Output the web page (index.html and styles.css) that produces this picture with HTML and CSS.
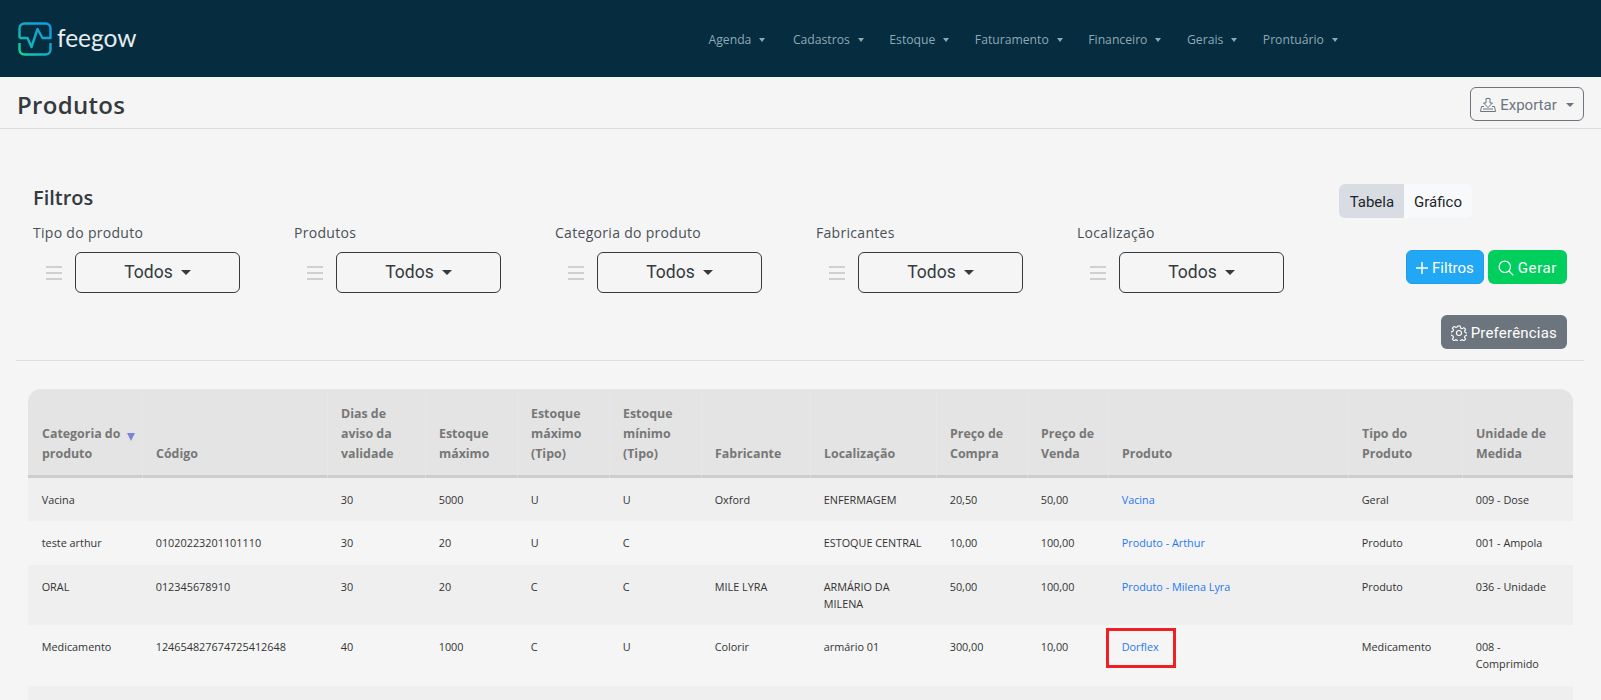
FILE: index.html
```html
<!DOCTYPE html>
<html lang="pt-BR">
<head>
<meta charset="utf-8">
<title>Produtos</title>
<link rel="stylesheet" href="styles.css">
</head>
<body>
<header class="topbar">
  <a class="logo" href="#">
    <svg class="logo-mark" viewBox="0 0 34 34" fill="none">
      <defs><linearGradient id="lg" x1="0" y1="34" x2="34" y2="0" gradientUnits="userSpaceOnUse"><stop offset="0" stop-color="#0fe08a"/><stop offset=".4" stop-color="#12b0c0"/><stop offset="1" stop-color="#0d9bea"/></linearGradient></defs>
      <path d="M1.500 16V6.500a5 5 0 0 1 5-5h21a5 5 0 0 1 5 5V16H24.500L19.500 7 13.500 25 9.500 16H1.500" stroke="url(#lg)" stroke-width="2.400" stroke-linejoin="round"/>
      <path d="M1.500 21V27.500a5 5 0 0 0 5 5h21a5 5 0 0 0 5-5V21" stroke="url(#lg)" stroke-width="2.400"/>
    </svg>
    <span class="logo-text">feegow</span>
  </a>
  <nav class="nav">
    <a class="nav-item" href="#">Agenda</a>
    <a class="nav-item" href="#">Cadastros</a>
    <a class="nav-item" href="#">Estoque</a>
    <a class="nav-item" href="#">Faturamento</a>
    <a class="nav-item" href="#">Financeiro</a>
    <a class="nav-item" href="#">Gerais</a>
    <a class="nav-item" href="#">Prontuário</a>
  </nav>
</header>

<div class="page-head">
  <h1 class="page-title">Produtos</h1>
  <button class="btn-export">
    <svg class="ico-export" viewBox="0 0 16 16" fill="none" stroke="#6c757d" stroke-width="1"><path d="M6 1.500h4v4.500h2.500L8 10.500 3.500 6H6z"/><path d="M4 9.500H1.500L.5 14.500h15l-1-5H12"/><path d="M3 12h10"/></svg>
    Exportar<span class="caret caret-sm"></span>
  </button>
</div>

<section class="filters">
  <div class="filters-left">
    <h2 class="filters-title">Filtros</h2>
    <div class="filter-row">
      <div class="filter"><label class="filter-label">Tipo do produto</label><div class="filter-ctl"><span class="handle"></span><button class="btn-select">Todos<span class="caret"></span></button></div></div>
      <div class="filter"><label class="filter-label">Produtos</label><div class="filter-ctl"><span class="handle"></span><button class="btn-select">Todos<span class="caret"></span></button></div></div>
      <div class="filter"><label class="filter-label">Categoria do produto</label><div class="filter-ctl"><span class="handle"></span><button class="btn-select">Todos<span class="caret"></span></button></div></div>
      <div class="filter"><label class="filter-label">Fabricantes</label><div class="filter-ctl"><span class="handle"></span><button class="btn-select">Todos<span class="caret"></span></button></div></div>
      <div class="filter"><label class="filter-label">Localização</label><div class="filter-ctl"><span class="handle"></span><button class="btn-select">Todos<span class="caret"></span></button></div></div>
    </div>
  </div>
  <div class="filters-right">
    <div class="toggle"><button class="toggle-btn is-active">Tabela</button><button class="toggle-btn">Gráfico</button></div>
    <div class="actions">
      <button class="btn btn-blue"><svg class="ico-plus" viewBox="0 0 12 12" fill="none" stroke="#fff" stroke-width="1.500"><path d="M6 0v12M0 6h12"/></svg>Filtros</button>
      <button class="btn btn-green"><svg class="ico" viewBox="0 0 16 16" fill="none" stroke="#fff" stroke-width="1.200"><circle cx="6.800" cy="6.800" r="5.700"/><path d="M11 11l4.300 4.300"/></svg>Gerar</button>
    </div>
    <button class="btn btn-grey"><svg class="ico" viewBox="0 0 16 16" fill="none" stroke="#fff" stroke-width="1.100"><circle cx="8" cy="8" r="2.500"/><path d="M6.800 1h2.400l.4 2 1.500.7 1.800-1.100 1.700 1.700-1.100 1.800.7 1.500 2 .4v2.400l-2 .4-.7 1.500 1.100 1.800-1.700 1.700-1.800-1.100-1.500.7-.4 2H6.800l-.4-2-1.500-.7-1.800 1.100-1.700-1.700 1.100-1.800-.7-1.500-2-.4V6.800l2-.4.7-1.500-1.100-1.800 1.700-1.700 1.800 1.100 1.500-.7z"/></svg>Preferências</button>
  </div>
</section>
<hr class="rule">

<div class="table-wrap">
<table class="data">
  <colgroup>
    <col class="c1"><col class="c2"><col class="c3"><col class="c4"><col class="c5"><col class="c6"><col class="c7"><col class="c8"><col class="c9"><col class="c10"><col class="c11"><col class="c12"><col class="c13">
  </colgroup>
  <thead>
    <tr>
      <th class="th-sort">Categoria do <span class="sort"></span> produto</th><th>Código</th><th>Dias de aviso da validade</th><th>Estoque máximo</th><th>Estoque máximo (Tipo)</th><th>Estoque mínimo (Tipo)</th><th>Fabricante</th><th>Localização</th><th>Preço de Compra</th><th>Preço de Venda</th><th>Produto</th><th>Tipo do Produto</th><th>Unidade de Medida</th>
    </tr>
  </thead>
  <tbody>
    <tr><td>Vacina</td><td></td><td>30</td><td>5000</td><td>U</td><td>U</td><td>Oxford</td><td>ENFERMAGEM</td><td>20,50</td><td>50,00</td><td><a href="#">Vacina</a></td><td>Geral</td><td>009 - Dose</td></tr>
    <tr><td>teste arthur</td><td>01020223201101110</td><td>30</td><td>20</td><td>U</td><td>C</td><td></td><td>ESTOQUE CENTRAL</td><td>10,00</td><td>100,00</td><td><a href="#">Produto - Arthur</a></td><td>Produto</td><td>001 - Ampola</td></tr>
    <tr><td>ORAL</td><td>012345678910</td><td>30</td><td>20</td><td>C</td><td>C</td><td>MILE LYRA</td><td>ARMÁRIO DA MILENA</td><td>50,00</td><td>100,00</td><td><a href="#">Produto - Milena Lyra</a></td><td>Produto</td><td>036 - Unidade</td></tr>
    <tr><td>Medicamento</td><td>124654827674725412648</td><td>40</td><td>1000</td><td>C</td><td>U</td><td>Colorir</td><td>armário 01</td><td>300,00</td><td>10,00</td><td class="marked"><a href="#">Dorflex</a><span class="mark-box"></span></td><td>Medicamento</td><td>008 - Comprimido</td></tr>
    <tr><td>&nbsp;</td><td></td><td></td><td></td><td></td><td></td><td></td><td></td><td></td><td></td><td></td><td></td><td></td></tr>
  </tbody>
</table>
</div>
</body>
</html>
```

FILE: styles.css
```css
* { box-sizing: border-box; }
html, body { margin: 0; height: 700px; overflow: hidden; }
body { background: #f5f5f5; font-family: "Open Sans", sans-serif; color: #212529; }
button { font-family: Roboto, "Liberation Sans", sans-serif; cursor: pointer; }

.topbar { height: 77px; background: #052c3f; display: flex; align-items: center; }
.logo { display: flex; align-items: center; margin-left: 18px; text-decoration: none; width: 118px; }
.logo-mark { width: 34px; height: 34px; flex: none; }
.logo-text { font-family: Lato, sans-serif; font-weight: 400; font-size: 24.5px; color: #e6edf0; margin-left: 5px; line-height: 34px; position: relative; top: -1px; }
.nav { display: flex; margin-left: 572.5px; position: relative; top: 1px; }
.nav-item { font-size: 12.2px; color: #8ea9b5; text-decoration: none; margin-right: 25.5px; display: flex; align-items: center; }
.nav-item:first-child { margin-right: 27.5px; }
.nav-item::after { content: ""; margin-left: 8px; border-top: 4px solid #8ea9b5; border-left: 3.5px solid transparent; border-right: 3.5px solid transparent; }

.page-head { height: 52px; border-bottom: 1px solid #dcdcdc; display: flex; align-items: center; justify-content: space-between; padding: 3px 17px 0; }
.page-title { margin: 0; font-size: 24px; font-weight: 600; color: #343a40; letter-spacing: .3px; }
.btn-export { height: 34px; width: 114px; border: 1px solid #6c757d; border-radius: 6px; background: transparent; color: #6c757d; font-size: 15px; display: flex; align-items: center; justify-content: center; padding: 1px 0 0; }
.ico-export { width: 16px; height: 16px; margin-right: 4px; }
.caret { display: inline-block; margin-left: 8px; border-top: 5px solid currentColor; border-left: 5px solid transparent; border-right: 5px solid transparent; vertical-align: middle; }
.caret-sm { margin-left: 9px; border-top-width: 4px; border-left-width: 4px; border-right-width: 4px; }

.filters { display: flex; justify-content: space-between; padding: 55px 34px 11px 33px; }
.filters-title { margin: 0 0 12px; font-size: 20px; font-weight: 600; line-height: 28px; color: #343a40; }
.filter-row { display: flex; }
.filter { width: 261px; }
.filter-label { display: block; font-size: 14px; line-height: 18px; color: #495057; letter-spacing: .3px; }
.filter-ctl { display: flex; align-items: center; margin-top: 10px; padding-left: 13px; }
.handle { width: 16px; height: 14px; margin-right: 13px; border-top: 2px solid #d0d0d0; border-bottom: 2px solid #d0d0d0; position: relative; }
.handle::after { content: ""; position: absolute; left: 0; right: 0; top: 4px; height: 2px; background: #d0d0d0; }
.btn-select { width: 165px; height: 41px; background: transparent; border: 1px solid #343a40; border-radius: 6px; font-size: 17.5px; color: #343a40; padding: 0 0 2px; }

.filters-right { display: flex; flex-direction: column; align-items: flex-end; }
.toggle { display: flex; height: 34px; margin-right: 95px; margin-bottom: 32px; border-radius: 6px; overflow: hidden; }
.toggle-btn { border: 0; background: #f8f9fa; font-size: 15px; color: #212529; padding: 2px 10px 0; }
.toggle-btn.is-active { background: #d8dde4; padding-left: 10.5px; }
.actions { display: flex; gap: 4px; margin-bottom: 31px; }
.btn { height: 34px; border: 1px solid transparent; border-radius: 6px; color: #fff; font-size: 15px; display: flex; align-items: center; padding: 1px 9px 0; }
.ico { width: 16px; height: 16px; margin-right: 4px; }
.ico-plus { width: 12px; height: 12px; margin-right: 4px; }
.btn-blue { background: #22a7f5; border-color: #1c9eea; }
.btn-green { background: #00cf5d; letter-spacing: .6px; }
.btn-grey { background: #6c757d; letter-spacing: .2px; }

.rule { margin: 0 17px 0 16px; border: 0; border-top: 1px solid #e0e0e0; }

.table-wrap { margin: 28px 0 0 28px; width: 1545px; border-radius: 13px 13px 0 0; overflow: hidden; }
.data { width: 1545px; table-layout: fixed; border-collapse: separate; border-spacing: 0; font-size: 10.85px; }
.c1 { width: 114px; } .c2 { width: 185px; } .c3 { width: 98px; } .c4 { width: 92px; } .c5 { width: 92px; } .c6 { width: 92px; } .c7 { width: 109px; } .c8 { width: 126px; } .c9 { width: 91px; } .c10 { width: 81px; } .c11 { width: 240px; } .c12 { width: 114px; } .c13 { width: 112px; }
.data th { height: 89px; background: #e4e4e4; border-bottom: 3px solid #cdcdcd; border-left: 1px solid #e7e7e7; color: #777; font-size: 12.4px; font-weight: 700; line-height: 20px; text-align: left; vertical-align: bottom; padding: 0 12px 11px 13px; }
.data th:first-child { border-left: 0; padding-left: 14px; }
.data .th-sort { padding-right: 4px; }
.sort { display: inline-block; margin-left: 3px; border-top: 8px solid #7b83d8; border-left: 4.5px solid transparent; border-right: 4.5px solid transparent; position: relative; top: 3px; }
.data td { padding: 13px 10px 13px 13.7px; line-height: 17px; color: #333; vertical-align: top; }
.data tbody tr:nth-child(even) td { padding-bottom: 14px; }
.data tbody tr:nth-child(odd) td { background: #efefef; }
.data a { color: #1f78f0; text-decoration: none; }
.marked { position: relative; }
.mark-box { position: absolute; left: -2px; top: 3px; width: 70px; height: 40px; border: 3px solid #ee2024; }
```
